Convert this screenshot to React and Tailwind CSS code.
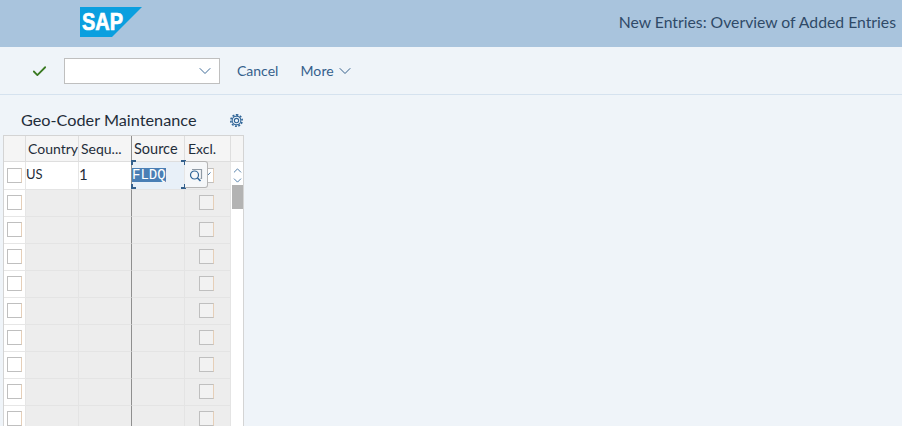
import React from 'react';
import { ChevronDown, ChevronUp, Check } from 'lucide-react';

const Box = ({ grey, children }) => (
  <div className={`w-[15px] h-[15px] border border-[#bfbfbf] border-r-[#e6cfb8] flex items-center justify-center ${grey ? 'bg-[#f2f2f2]' : 'bg-white'}`}>{children}</div>
);

const Gear = () => (
  <svg width="13" height="13" viewBox="0 0 24 24" fill="none" stroke="#2f6497" strokeWidth="2">
    <circle cx="12" cy="12" r="4" />
    <circle cx="12" cy="12" r="8" />
    <path strokeDasharray="3.5 2.8" strokeWidth="3" d="M12 1.5a10.5 10.5 0 1 1 0 21a10.5 10.5 0 1 1 0-21" />
  </svg>
);

// value help icon: square behind a magnifier
const ValueHelp = () => (
  <svg width="14" height="14" viewBox="0 0 14 14" fill="none" strokeWidth="1.2">
    <path d="M3 1.5h9.5v9h-1" stroke="#8f9aa5" />
    <circle cx="5.5" cy="7" r="4" stroke="#2f6497" />
    <path d="M8.5 10l3 3" stroke="#2f6497" strokeWidth="1.6" />
  </svg>
);

const rows = Array.from({ length: 9 });

export default function App() {
  return (
    <div className="h-screen w-full overflow-hidden bg-[#eff4f9] font-['Lato',sans-serif] text-[#32363a]">
      {/* Header */}
      <div className="h-[47px] bg-[#a9c4dd] flex items-start justify-between pr-[6px]">
        <svg className="ml-[80px] mt-[7px]" width="62" height="30" viewBox="0 0 62 30">
          <polygon points="0,0 62,0 32,30 0,30" fill="#0a9fdf" />
          <text x="2" y="23" fill="white" stroke="white" strokeWidth="0.7" fontSize="23" fontWeight="700" fontFamily="Liberation Sans, sans-serif" textLength="41" lengthAdjust="spacingAndGlyphs">SAP</text>
        </svg>
        <div className="mt-[12px] text-[15.75px] leading-5 text-[#2f4a68]">New Entries: Overview of Added Entries</div>
      </div>

      {/* Toolbar */}
      <div className="h-[48px] border-b border-[#d5e2ef] flex items-center pl-[31px] pt-[1px]">
        <Check size={17} strokeWidth={2.5} className="text-[#3a7a22]" />
        <div className="ml-[16px] w-[156px] h-[26px] bg-white border border-[#bfbfbf] flex items-center justify-end pr-[4px]">
          <ChevronDown size={20} strokeWidth={1.2} className="text-[#3f6c99]" />
        </div>
        <span className="ml-[17px] text-sm text-[#35608c]">Cancel</span>
        <span className="ml-[22px] text-sm text-[#35608c] tracking-[0.15px]">More</span>
        <ChevronDown size={20} strokeWidth={1.2} className="ml-[1px] text-[#35608c]" />
      </div>

      {/* Table panel */}
      <div className="pl-[3px] w-[244px]">
        <div className="h-[40px] flex items-center justify-between pl-[18px] pr-[1px] pt-[10px]">
          <span className="text-[16.25px] text-[#1f2d3a]">Geo-Coder Maintenance</span>
          <Gear />
        </div>

        <div className="relative bg-white border-l border-r border-t border-[#d4d4d4]">
          <div className="grid grid-cols-[22px_53px_53px_53px_46px_12px] text-sm text-[#1f2d3a]">
            {/* Column header */}
            <div className="h-[26px] bg-[#f5f5f5] border-r border-b border-[#dedede]"></div>
            <div className="h-[26px] bg-[#f5f5f5] border-r border-b border-[#dedede] pl-[2px] leading-[26px] overflow-hidden whitespace-nowrap">Country</div>
            <div className="h-[26px] bg-[#f5f5f5] border-r border-b border-r-[#8f8f8f] border-b-[#dedede] pl-[2px] leading-[26px] overflow-hidden whitespace-nowrap">Sequ...</div>
            <div className="h-[26px] bg-[#f5f5f5] border-r border-b border-[#dedede] pl-[2px] leading-[26px] text-[14.5px]">Source</div>
            <div className="h-[26px] bg-[#f5f5f5] border-r border-b border-[#dedede] pl-[3px] leading-[26px]">Excl.</div>
            <div className="h-[26px] bg-[#f5f5f5] border-b border-[#dedede]"></div>

            {/* Filled row */}
            <div className="h-[27px] bg-white border-r border-[#e6e6e6] flex items-center justify-center pr-[1px]"><Box /></div>
            <div className="h-[27px] bg-white border-r border-[#e6e6e6] text-[13px] leading-[25px]">US</div>
            <div className="h-[27px] bg-white border-r border-[#8f8f8f] text-[15px] leading-[25px]">1</div>
            <div className="h-[27px] bg-[#e8f0f8] border-r border-[#e6e6e6] flex items-center pb-[1px]">
              <span className="bg-[#4a7fb5] text-white text-[14px] leading-[14px] font-['Liberation_Mono',monospace]">FLDQ</span>
            </div>
            <div className="h-[27px] bg-[#ededed] border-r border-[#e6e6e6] flex items-center justify-center pr-[2px]">
              <Box><Check size={11} strokeWidth={2} className="text-[#2f6497]" /></Box>
            </div>
            <div className="h-[27px] bg-white flex flex-col items-center justify-center">
              <ChevronUp size={13} strokeWidth={1.5} className="-my-[1.5px] text-[#2f6497]" />
              <ChevronDown size={13} strokeWidth={1.5} className="-my-[1.5px] text-[#2f6497]" />
            </div>

            {/* Empty rows */}
            {rows.map((_, i) => (
              <React.Fragment key={i}>
                <div className="h-[27px] bg-white border-t border-r border-[#e6e6e6] flex items-center justify-center pr-[1px] pb-[1px]"><Box /></div>
                <div className="h-[27px] bg-[#ededed] border-t border-r border-[#e4e4e4]"></div>
                <div className="h-[27px] bg-[#ededed] border-t border-r border-t-[#e4e4e4] border-r-[#8f8f8f]"></div>
                <div className="h-[27px] bg-[#ededed] border-t border-r border-[#e4e4e4]"></div>
                <div className="h-[27px] bg-[#ededed] border-t border-r border-[#e4e4e4] flex items-center justify-center pr-[2px] pb-[1px]"><Box grey /></div>
                <div className="h-[27px] bg-white"></div>
              </React.Fragment>
            ))}
          </div>

          {/* Scrollbar thumb */}
          <div className="absolute left-[228px] top-[49px] w-[11px] h-[24px] bg-[#b3b3b3]"></div>

          {/* Focus frame on the Source cell */}
          <div className="absolute left-[127px] top-[24px] w-[55px] h-[29px]">
            <div className="absolute left-0 top-0 w-[5px] h-[5px] border-l-2 border-t-2 border-[#34608c]"></div>
            <div className="absolute right-0 top-0 w-[5px] h-[5px] border-r-2 border-t-2 border-[#34608c]"></div>
            <div className="absolute left-0 bottom-0 w-[5px] h-[5px] border-l-2 border-b-2 border-[#34608c]"></div>
            <div className="absolute right-0 bottom-0 w-[5px] h-[5px] border-r-2 border-b-2 border-[#34608c]"></div>
          </div>

          {/* Search help button */}
          <div className="absolute left-[181px] top-[25px] w-[23px] h-[27px] bg-[#f5f7f9] border border-l-0 border-[#b5b5b5] rounded-r-[3px] flex items-center justify-center">
            <ValueHelp />
          </div>
        </div>
      </div>
    </div>
  );
}
